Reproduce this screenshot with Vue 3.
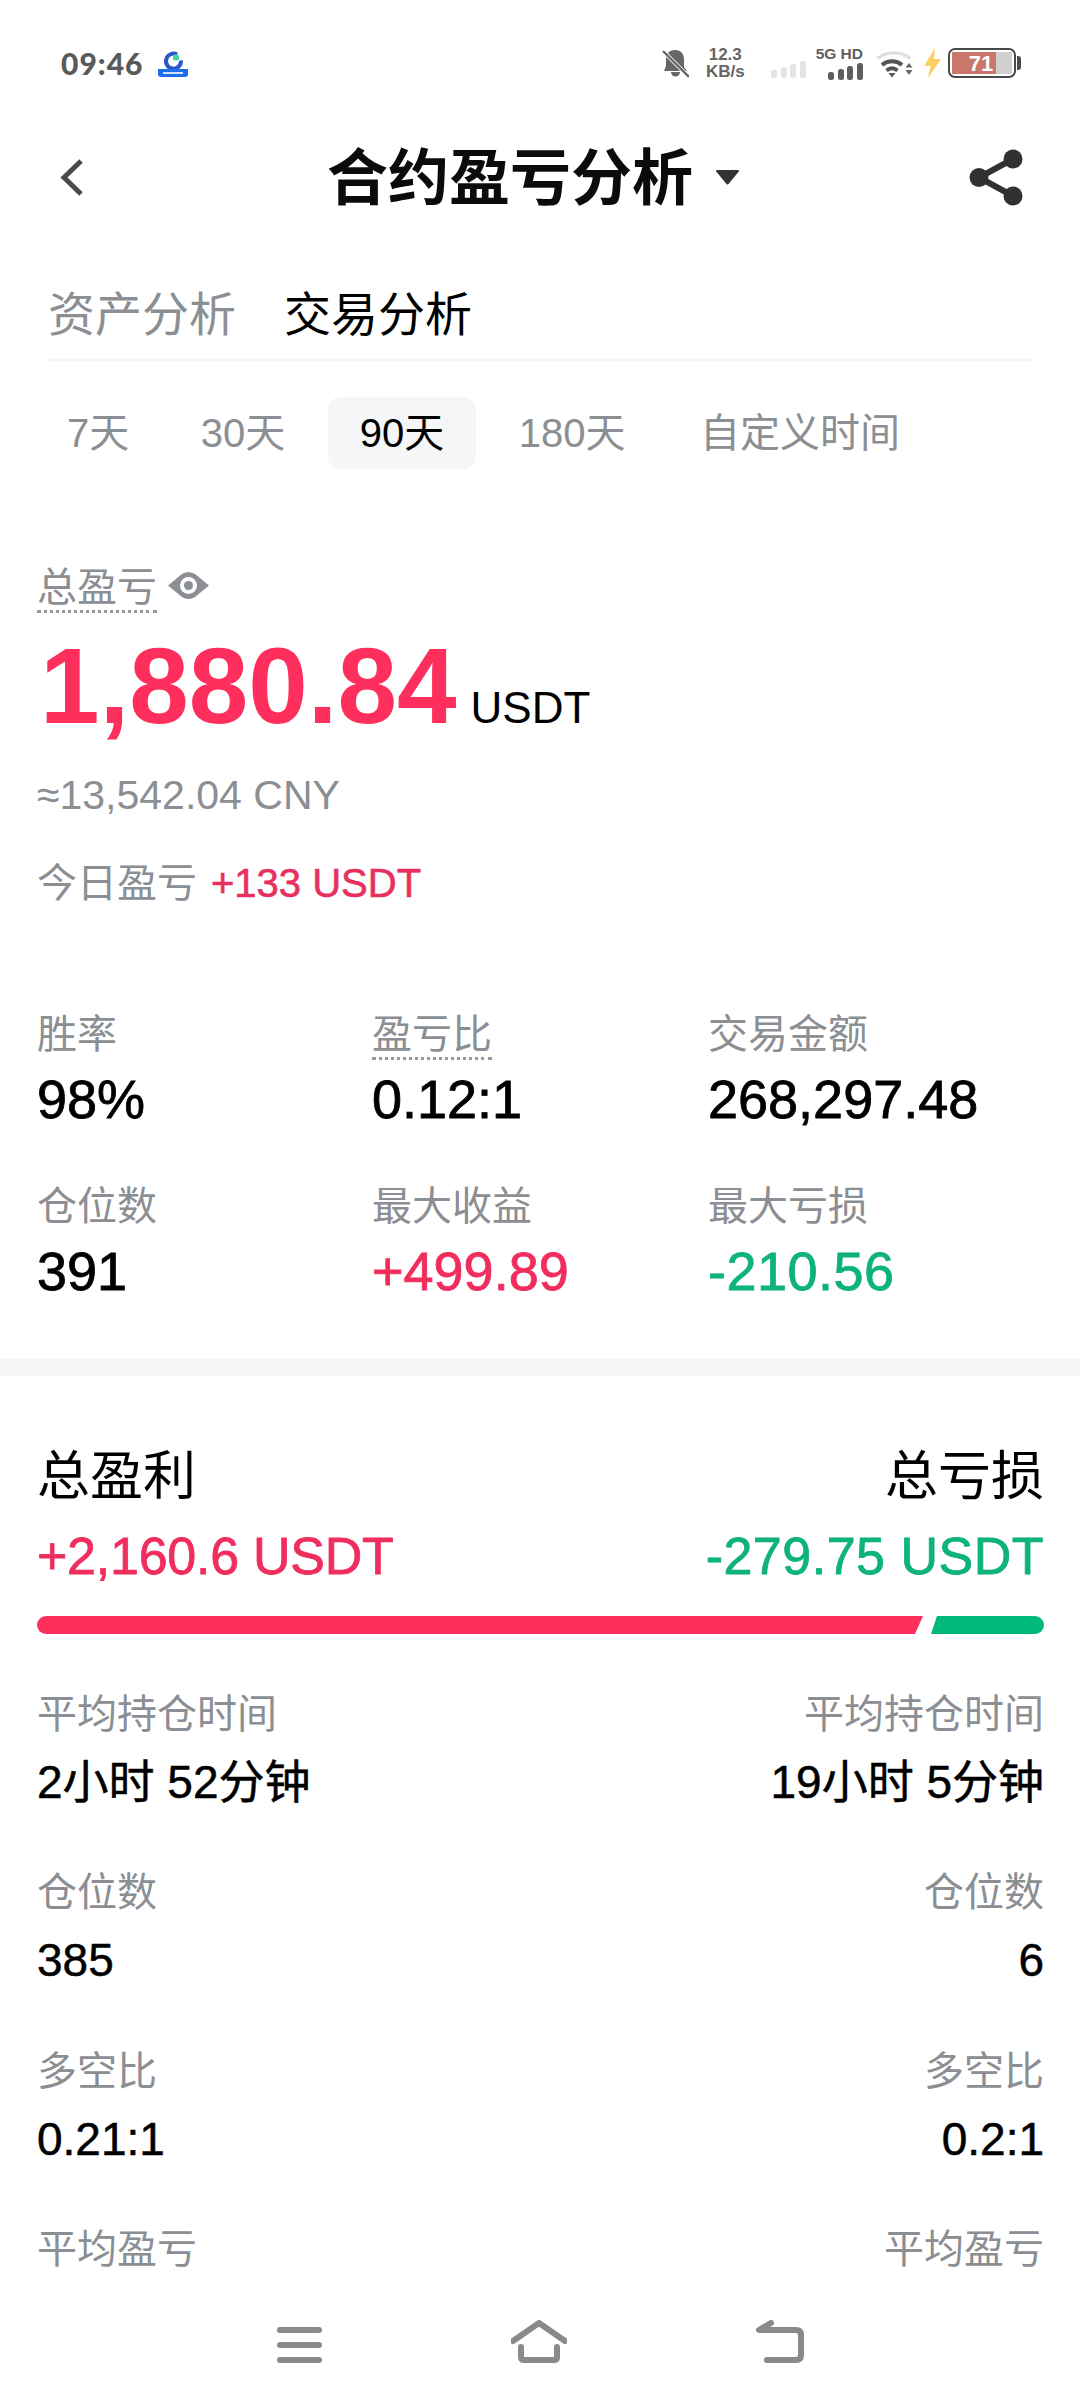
<script setup>
const ranges = ['7天', '30天', '90天', '180天', '自定义时间']

const stats = [
  { label: '胜率', value: '98%' },
  { label: '盈亏比', value: '0.12:1', dotted: true },
  { label: '交易金额', value: '268,297.48' },
  { label: '仓位数', value: '391' },
  { label: '最大收益', value: '+499.89', tone: 'up' },
  { label: '最大亏损', value: '-210.56', tone: 'down' },
]

const details = [
  { label: '平均持仓时间', win: '2小时 52分钟', loss: '19小时 5分钟' },
  { label: '仓位数', win: '385', loss: '6' },
  { label: '多空比', win: '0.21:1', loss: '0.2:1' },
  { label: '平均盈亏', win: '', loss: '' },
]
</script>

<template>
  <div class="page">
    <div class="status">
      <div class="status-left">
        <span class="clock">09:46</span>
        <svg class="app-icon" width="30" height="27" viewBox="0 0 30 27">
          <path d="M19 4.500a7.500 7.500 0 1 0 4 6" fill="none" stroke="#2c55c9" stroke-width="4" />
          <rect x="15" y="4.500" width="6" height="6" rx="2" fill="#3dd6a5" />
          <path d="M0 19h30v5a3 3 0 0 1-3 3H3a3 3 0 0 1-3-3z" fill="#1a6fe8" />
          <rect x="5" y="22" width="20" height="2" fill="#cfe0ff" />
        </svg>
      </div>
      <div class="status-right">
        <svg class="bell" width="27" height="29" viewBox="0 0 27 29">
          <path d="M13 1c6 0 9 4 9 10v7l3 4H2l2-5v-6c0-6 3-10 9-10z" fill="#666" />
          <path d="M9 23a4.500 4.500 0 0 0 9 0z" fill="#666" />
          <path d="M0 1l27 27" stroke="#fff" stroke-width="4" />
          <path d="M1 2l26 26" stroke="#666" stroke-width="2.400" />
        </svg>
        <div class="speed">
          <span class="speed-num">12.3</span>
          <span>KB/s</span>
        </div>
        <svg class="sim" width="35" height="17" viewBox="0 0 35 17" fill="#e4e4e4">
          <rect x="0" y="9" width="6" height="8" rx="2" />
          <rect x="10" y="6" width="6" height="11" rx="2" />
          <rect x="19" y="3" width="6" height="14" rx="2" />
          <rect x="29" y="0" width="6" height="17" rx="2" />
        </svg>
        <div class="sim-main">
          <span class="net">5G HD</span>
          <svg width="35" height="17" viewBox="0 0 35 17" fill="#5f5f5f">
            <rect x="0" y="9" width="6" height="8" rx="2.500" />
            <rect x="10" y="6" width="6" height="11" rx="2.500" />
            <rect x="19" y="3" width="6" height="14" rx="2.500" />
            <rect x="29" y="0" width="6" height="17" rx="2.500" />
          </svg>
        </div>
        <svg class="wifi" width="37" height="29" viewBox="0 0 37 29">
          <path d="M1.500 9.500c9-7.500 24-7.500 33 0" fill="none" stroke="#dedede" stroke-width="3.400" />
          <path d="M6 16c6-5 14-5 20 0" fill="none" stroke="#555" stroke-width="4" />
          <path d="M10.500 21.500c3.600-3 7.400-3 11 0" fill="none" stroke="#555" stroke-width="3.800" />
          <path d="M12.500 24h7l-3.500 4.500z" fill="#555" />
          <path d="M33 14l3.500 4.500h-7zM29.500 21h7L33 26z" fill="#666" />
        </svg>
        <svg class="bolt" width="17" height="30" viewBox="0 0 17 30">
          <path d="M11 0L0 18h6.500L4 30l13-19h-7z" fill="#fbcf62" />
        </svg>
        <svg class="battery" width="73" height="30" viewBox="0 0 73 30">
          <rect x="1" y="1" width="66" height="28" rx="6" fill="#fff" stroke="#4a4a4a" stroke-width="2" />
          <rect x="4" y="4" width="44" height="22" fill="#c9776b" />
          <rect x="48" y="4" width="16" height="22" fill="#d0d0d0" />
          <path d="M69 8h1a3 3 0 0 1 3 3v8a3 3 0 0 1-3 3h-1z" fill="#4a4a4a" />
          <text x="33" y="23" class="battery-text">71</text>
        </svg>
      </div>
    </div>

    <div class="header">
      <svg class="back" width="24" height="39" viewBox="0 0 24 39">
        <path d="M21 3L4 19.500 21 36" fill="none" stroke="#484a4d" stroke-width="5" />
      </svg>
      <div class="title">
        <span class="title-text">合约盈亏分析</span>
        <svg width="23" height="15" viewBox="0 0 23 15">
          <path d="M1 0h21a1 1 0 0 1 .8 1.600L12.500 14a1.300 1.300 0 0 1-2 0L.2 1.600A1 1 0 0 1 1 0z" fill="#333" />
        </svg>
      </div>
      <svg class="share" width="54" height="57" viewBox="0 0 54 57">
        <path d="M44 10L10 28.500 44 47" fill="none" stroke="#2f3133" stroke-width="6" />
        <circle cx="44" cy="10" r="9.500" fill="#2f3133" />
        <circle cx="10" cy="28.500" r="9.500" fill="#2f3133" />
        <circle cx="44" cy="47" r="9.500" fill="#2f3133" />
      </svg>
    </div>

    <div class="tabs">
      <span class="tab">资产分析</span>
      <span class="tab tab-on">交易分析</span>
    </div>

    <div class="ranges">
      <span v-for="r in ranges" :key="r" class="range" :class="{ 'range-on': r === '90天' }">{{ r }}</span>
    </div>

    <div class="summary">
      <div class="pnl-label">
        <span class="dotted">总盈亏</span>
        <svg class="eye" width="41" height="27" viewBox="0 0 41 27">
          <path d="M0 13.500L14 2c4-2.500 9-2.500 13 0l14 11.500L27 25c-4 2.500-9 2.500-13 0z" fill="#8b8e92" />
          <circle cx="20.500" cy="13.500" r="8.500" fill="#fff" />
          <circle cx="20.500" cy="13.500" r="4.500" fill="#8b8e92" />
        </svg>
      </div>
      <div class="pnl">
        <span class="pnl-num">1,880.84</span>
        <span class="pnl-unit">USDT</span>
      </div>
      <div class="cny">≈13,542.04 CNY</div>
      <div class="today">
        <span>今日盈亏</span>
        <span class="today-num">+133 USDT</span>
      </div>
    </div>

    <div class="stats">
      <div v-for="s in stats" :key="s.label" class="stat">
        <div class="stat-label"><span :class="{ dotted: s.dotted }">{{ s.label }}</span></div>
        <div class="stat-value" :class="s.tone">{{ s.value }}</div>
      </div>
    </div>

    <div class="band"></div>

    <div class="totals">
      <div class="totals-row">
        <span>总盈利</span>
        <span>总亏损</span>
      </div>
      <div class="totals-row totals-num">
        <span class="up">+2,160.6 USDT</span>
        <span class="down">-279.75 USDT</span>
      </div>
      <div class="bar">
        <div class="bar-win"></div>
        <div class="bar-loss"></div>
      </div>
    </div>

    <div class="details">
      <div v-for="d in details" :key="d.label" class="detail">
        <div class="detail-row detail-label">
          <span>{{ d.label }}</span>
          <span>{{ d.label }}</span>
        </div>
        <div class="detail-row detail-value">
          <span>{{ d.win }}</span>
          <span>{{ d.loss }}</span>
        </div>
      </div>
    </div>

    <div class="navbar">
      <svg width="45" height="36" viewBox="0 0 45 36">
        <path d="M3 3h39M3 18h39M3 33h39" stroke="#8a8a8a" stroke-width="6" stroke-linecap="round" />
      </svg>
      <svg width="56" height="43" viewBox="0 0 56 43">
        <path d="M2 21L28 3l26 18" fill="none" stroke="#8a8a8a" stroke-width="6" stroke-linecap="round" stroke-linejoin="round" />
        <path d="M10 27v10q0 3 3 3h30q3 0 3-3V27" fill="none" stroke="#8a8a8a" stroke-width="6" stroke-linecap="round" />
      </svg>
      <svg width="48" height="43" viewBox="0 0 48 43">
        <path d="M15 3L3 10h37q5 0 5 5v20q0 5-5 5H11" fill="none" stroke="#8a8a8a" stroke-width="6" stroke-linecap="round" stroke-linejoin="round" />
      </svg>
    </div>
  </div>
</template>

<style>
html,
body {
  background: #fff;
}
</style>

<style scoped>
.page {
  position: relative;
  width: 1080px;
  height: 2408px;
  overflow: hidden;
  background: #fff;
  color: #000;
  font-family: "Liberation Sans", "Noto Sans CJK SC", sans-serif;
}

.status {
  height: 126px;
  display: flex;
  justify-content: space-between;
  align-items: center;
  padding: 0 59px 0 61px;
  box-sizing: border-box;
}

.status-left {
  display: flex;
  align-items: center;
  gap: 15px;
}

.clock {
  font-family: "Lato", sans-serif;
  font-size: 30px;
  font-weight: 900;
  color: #5a5a5a;
  letter-spacing: 1px;
}

.status-right {
  display: flex;
  align-items: center;
}

.speed {
  margin-left: 17px;
  display: flex;
  flex-direction: column;
  font-size: 17px;
  line-height: 17px;
  font-weight: 700;
  color: #666;
  text-align: center;
}

.sim {
  margin-left: 26px;
  margin-top: 12px;
}

.sim-main {
  margin-left: 10px;
  display: flex;
  flex-direction: column;
  align-items: flex-end;
  gap: 3px;
}

.net {
  font-size: 15.5px;
  line-height: 13px;
  font-weight: 700;
  color: #5f5f5f;
}

.wifi {
  margin-left: 13px;
}

.bolt {
  margin-left: 11px;
}

.battery {
  margin-left: 7px;
}

.battery-text {
  font-size: 22px;
  font-weight: 700;
  fill: #fff;
  text-anchor: middle;
}

.header {
  height: 102px;
  display: flex;
  align-items: center;
  padding: 0 57px 0 60px;
}

.title {
  margin-left: 243px;
  display: flex;
  align-items: center;
  gap: 23px;
  font-size: 61px;
  font-weight: 700;
  color: #0b0b0b;
}

.title-text {
  margin-top: -8px;
}

.share {
  margin-left: auto;
}

.tabs {
  margin: 57px 48px 0;
  height: 74px;
  display: flex;
  gap: 48px;
  border-bottom: 2px solid #f3f4f5;
}

.tab {
  font-size: 47px;
  line-height: 60px;
  color: #8b8e92;
}

.tab-on {
  color: #000;
}

.ranges {
  margin-top: 36px;
  padding-left: 32px;
  display: flex;
  gap: 10.5px;
}

.range {
  height: 72px;
  line-height: 72px;
  padding: 0 32px;
  font-size: 40px;
  color: #8b8e92;
  border-radius: 12px;
}

.range:first-child {
  margin-left: 3px;
  margin-right: -3px;
}

.range-on {
  background: #f5f6f7;
  color: #000;
}

.summary {
  margin-top: 95px;
  padding: 0 37px;
}

.pnl-label {
  display: flex;
  align-items: center;
  gap: 11px;
  height: 48px;
  font-size: 40px;
  color: #8b8e92;
}

.eye {
  margin-top: -6px;
}

.dotted {
  border-bottom: 3px dotted #9a9a9a;
  line-height: 46px;
  display: inline-block;
}

.pnl {
  margin-top: 14px;
  display: flex;
  align-items: baseline;
  gap: 14px;
  height: 120px;
  line-height: 120px;
}

.pnl-num {
  font-size: 107px;
  font-weight: 700;
  color: #fe2f5c;
  padding-left: 3px;
}

.pnl-unit {
  font-size: 44px;
}

.cny {
  margin-top: 19px;
  font-size: 41px;
  line-height: 60px;
  color: #8b8e92;
}

.today {
  margin-top: 28px;
  display: flex;
  align-items: center;
  gap: 14px;
  font-size: 40px;
  line-height: 60px;
  color: #8b8e92;
}

.today-num {
  font-size: 40px;
  color: #e8305f;
  -webkit-text-stroke: 0.6px #e8305f;
}

.stats {
  margin-top: 96px;
  padding-left: 37px;
  display: grid;
  grid-template-columns: 335px 336px 1fr;
  row-gap: 49px;
}

.stat-label {
  font-size: 40px;
  height: 50px;
  line-height: 50px;
  color: #8b8e92;
}

.stat-value {
  margin-top: 7px;
  font-size: 54px;
  line-height: 66px;
  -webkit-text-stroke: 0.8px currentColor;
}

.up {
  color: #f02e5e;
}

.down {
  color: #0db27c;
  letter-spacing: 0.5px;
}

.band {
  margin-top: 55px;
  height: 17px;
  background: #f5f6f7;
}

.totals {
  margin-top: 67px;
  padding: 0 36px 0 37px;
}

.totals-row {
  display: flex;
  justify-content: space-between;
  font-size: 53px;
  line-height: 68px;
}

.totals-num {
  margin-top: 11px;
  font-size: 52px;
  line-height: 68px;
  -webkit-text-stroke: 0.8px currentColor;
}

.totals-num .up {
  letter-spacing: -0.25px;
}

.bar {
  margin-top: 26px;
  height: 18px;
  display: flex;
  gap: 8px;
}

.bar-win {
  flex: 1;
  background: #fe2f5c;
  border-radius: 9px 0 0 9px;
  clip-path: polygon(0 0, 100% 0, calc(100% - 8px) 100%, 0 100%);
}

.bar-loss {
  width: 113px;
  background: #00b97b;
  border-radius: 0 9px 9px 0;
  clip-path: polygon(6px 0, 100% 0, 100% 100%, 0 100%);
}

.details {
  margin-top: 55px;
  padding: 0 36px 0 37px;
}

.detail {
  height: 178.3px;
}

.detail-row {
  display: flex;
  justify-content: space-between;
}

.detail-label {
  font-size: 40px;
  line-height: 50px;
  color: #8b8e92;
}

.detail-value {
  margin-top: 18px;
  font-size: 46px;
  line-height: 50px;
  -webkit-text-stroke: 0.5px currentColor;
}

.navbar {
  position: absolute;
  left: 277px;
  top: 2320px;
  width: 527px;
  height: 43px;
  display: flex;
  justify-content: space-between;
  align-items: flex-end;
}
</style>
